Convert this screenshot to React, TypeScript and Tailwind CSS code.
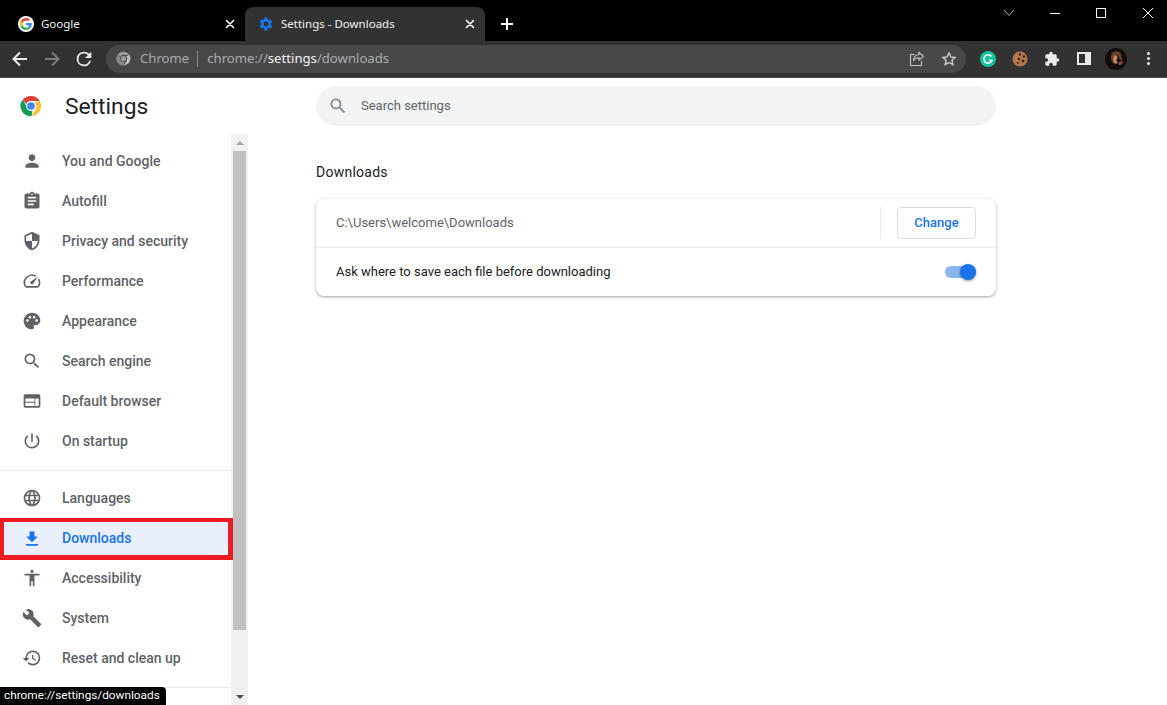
import type { ReactNode } from "react";
import {
  MdAccessibility,
  MdAssignment,
  MdBuild,
  MdFileDownload,
  MdLanguage,
  MdPalette,
  MdPerson,
  MdPowerSettingsNew,
  MdRestore,
  MdSearch,
  MdSecurity,
  MdSpeed,
  MdWeb,
} from "react-icons/md";
import type { IconType } from "react-icons";

type NavItem = { label: string; icon: IconType };

const topItems: NavItem[] = [
  { label: "You and Google", icon: MdPerson },
  { label: "Autofill", icon: MdAssignment },
  { label: "Privacy and security", icon: MdSecurity },
  { label: "Performance", icon: MdSpeed },
  { label: "Appearance", icon: MdPalette },
  { label: "Search engine", icon: MdSearch },
  { label: "Default browser", icon: MdWeb },
  { label: "On startup", icon: MdPowerSettingsNew },
];

const bottomItems: NavItem[] = [
  { label: "Accessibility", icon: MdAccessibility },
  { label: "System", icon: MdBuild },
  { label: "Reset and clean up", icon: MdRestore },
];

function ChromeLogo({ size, mono }: { size: number; mono?: boolean }) {
  const red = mono ? "#9a9a9a" : "#db4437";
  const yellow = mono ? "#bdbdbd" : "#fbc02d";
  const green = mono ? "#8a8a8a" : "#0f9d58";
  const center = mono ? "#9a9a9a" : "#4285f4";
  return (
    <svg width={size} height={size} viewBox="0 0 24 24">
      <path d="M12 1a11 11 0 0 1 9.530 5.500H12a5.500 5.500 0 0 0-5.200 3.700L3.100 5A11 11 0 0 1 12 1z" fill={red} />
      <path d="M21.530 6.500A11 11 0 0 1 12.600 23l4.200-6.900a5.500 5.500 0 0 0 .1-6.100l-.9-1.200-.2-.3z" fill={yellow} />
      <path d="M12.600 23A11 11 0 0 1 3.100 5l4.600 8.500a5.500 5.500 0 0 0 6 3.800z" fill={green} />
      <circle cx="12" cy="12" r="5.300" fill={mono ? "#484848" : "#fff"} />
      <circle cx="12" cy="12" r="4.200" fill={center} />
    </svg>
  );
}

function GoogleLogo() {
  return (
    <div className="flex h-4 w-4 items-center justify-center rounded-full bg-white">
      <svg width="12" height="12" viewBox="0 0 48 48">
        <path fill="#EA4335" d="M24 9.500c3.500 0 6.700 1.300 9.100 3.500l6.800-6.800C35.900 2.400 30.300 0 24 0 14.600 0 6.500 5.400 2.600 13.200l7.900 6.200C12.400 13.700 17.700 9.500 24 9.500z" />
        <path fill="#4285F4" d="M46.900 24.500c0-1.600-.1-3.100-.4-4.500H24v9h12.900c-.6 3-2.200 5.500-4.700 7.200l7.600 5.900c4.400-4.100 7.100-10.200 7.100-17.600z" />
        <path fill="#FBBC05" d="M10.500 28.600a14.500 14.500 0 0 1 0-9.200l-7.900-6.200a24 24 0 0 0 0 21.600z" />
        <path fill="#34A853" d="M24 48c6.500 0 11.900-2.100 15.800-5.800l-7.600-5.900c-2.100 1.400-4.900 2.300-8.200 2.300-6.300 0-11.600-4.200-13.500-9.900l-7.900 6.200C6.500 42.600 14.600 48 24 48z" />
      </svg>
    </div>
  );
}

function CloseIcon() {
  return (
    <svg width="16" height="16" viewBox="0 0 16 16" stroke="#fff" strokeWidth="1.600" strokeLinecap="round" className="translate-x-px">
      <path d="M4.500 4.500l7 7M11.500 4.500l-7 7" />
    </svg>
  );
}

function Tab({ title, icon, active }: { title: string; icon: ReactNode; active?: boolean }) {
  return (
    <div
      className={`flex h-[34px] w-[240px] items-center pl-[13px] pr-[8px] ${
        active ? "rounded-t-[8px] bg-[#323232]" : ""
      }`}
    >
      <div className="mr-[7px] shrink-0">{icon}</div>
      <span className="flex-1 text-[11.5px] text-[#f1f3f4]">{title}</span>
      <CloseIcon />
    </div>
  );
}

function WindowControls() {
  return (
    <div className="ml-auto flex h-[26px] items-center self-start text-white">
      <svg width="12" height="8" viewBox="0 0 12 8" fill="none" stroke="#bbb" strokeWidth="1" className="mr-[35px]">
        <path d="M1 1l5 5.500L11 1" />
      </svg>
      <div className="mr-[36px] h-px w-[10px] bg-white" />
      <div className="mr-[36px] h-[10px] w-[10px] border border-white" />
      <svg width="12" height="12" viewBox="0 0 12 12" stroke="#fff" strokeWidth="1" className="mr-[13px]">
        <path d="M1 1l10 10M11 1L1 11" />
      </svg>
    </div>
  );
}

function TitleBar() {
  return (
    <div className="flex h-[41px] items-end bg-black pl-[5px]">
      <Tab title="Google" icon={<GoogleLogo />} />
      <Tab
        title="Settings - Downloads"
        active
        icon={
          <svg width="16" height="16" viewBox="0 0 24 24" fill="#1a73e8">
            <path d="M19.140 12.940c.04-.3.060-.61.060-.94s-.02-.64-.07-.94l2.030-1.580a.5.5 0 0 0 .12-.61l-1.920-3.320a.5.5 0 0 0-.59-.22l-2.390.96a7 7 0 0 0-1.620-.94l-.36-2.540a.48.48 0 0 0-.48-.41h-3.840a.47.47 0 0 0-.47.41l-.36 2.540c-.59.24-1.130.57-1.620.94l-2.390-.96a.48.48 0 0 0-.59.22L2.740 8.870a.47.47 0 0 0 .12.61l2.030 1.580c-.05.3-.09.63-.09.94s.02.64.07.94l-2.030 1.580a.5.5 0 0 0-.12.61l1.920 3.320c.12.22.37.29.59.22l2.390-.96c.5.38 1.030.7 1.620.94l.36 2.540c.05.24.24.41.48.41h3.840c.24 0 .44-.17.47-.41l.36-2.540c.59-.24 1.130-.56 1.620-.94l2.390.96c.22.08.47 0 .59-.22l1.920-3.320a.47.47 0 0 0-.12-.61zM12 15.600a3.600 3.600 0 1 1 0-7.200 3.600 3.600 0 0 1 0 7.200z" />
          </svg>
        }
      />
      <div className="flex h-[34px] w-[44px] items-center justify-center">
        <svg width="14" height="14" viewBox="0 0 14 14" stroke="#fff" strokeWidth="2">
          <path d="M7 1v12M1 7h12" />
        </svg>
      </div>
      <WindowControls />
    </div>
  );
}

function Omnibox() {
  return (
    <div className="flex h-[28px] w-[860px] items-center rounded-full bg-[#484848] pl-[10px] pr-[9px] text-[13.15px]">
      <ChromeLogo size={15} mono />
      <span className="ml-[9px] pt-px text-[#a9adb1]">Chrome</span>
      <div className="ml-[8px] mr-[9px] h-[16px] w-px bg-[#8a8a8a]" />
      <span className="pt-px text-[#a9adb1]">
        chrome://<span className="text-[#f1f3f4]">settings</span>/downloads
      </span>
      <div className="ml-auto flex items-center gap-[16px]">
        <svg width="16" height="16" viewBox="0 0 16 16" fill="none" stroke="#c4c7c5" strokeWidth="1.100">
          <path d="M10 1.500l4.500 3.800L10 9V6.800C7.500 6.800 5.500 7.800 4.500 10c0-3.800 2-6.100 5.500-6.500z" />
          <path d="M5.500 3.500H1.500v11h11V10" />
        </svg>
        <svg width="16" height="16" viewBox="0 0 24 24" fill="none" stroke="#d0d3d4" strokeWidth="2">
          <path d="M12 3l2.800 6 6.400.7-4.800 4.300 1.400 6.400L12 17.200 6.200 20.400l1.400-6.400-4.800-4.300 6.400-.7z" />
        </svg>
      </div>
    </div>
  );
}

function Toolbar() {
  return (
    <div className="flex h-[37px] items-center border-b border-[#4b4b4b] bg-[#323232] pb-px">
      <div className="flex w-[106px] items-center pl-[11px]">
        <svg width="18" height="18" viewBox="0 0 18 18" fill="none" stroke="#e8eaed" strokeWidth="2">
          <path d="M16 9H3M9 2.500L2.500 9 9 15.500" />
        </svg>
        <svg width="18" height="18" viewBox="0 0 18 18" fill="none" stroke="#7b7d7f" strokeWidth="2" className="ml-[14px]">
          <path d="M2 9h13M9 2.500L15.500 9 9 15.500" />
        </svg>
        <svg width="22" height="22" viewBox="0 0 24 24" fill="#e8eaed" className="ml-[12px]">
          <path d="M17.650 6.350A8 8 0 0 0 12 4a8 8 0 1 0 7.740 10h-2.080A6 6 0 1 1 12 6c1.660 0 3.140.69 4.220 1.780L13 11h7V4z" />
        </svg>
      </div>
      <Omnibox />
      <Extensions />
    </div>
  );
}

function Extensions() {
  return (
    <div className="ml-[14px] flex items-center">
      <div className="flex h-[16px] w-[16px] items-center justify-center rounded-full bg-[#15c39a]">
        <svg width="12" height="12" viewBox="0 0 12 12" fill="none" stroke="#fff" strokeWidth="1.500">
          <path d="M9.500 3.500A4.200 4.200 0 1 0 10 7.500H7" />
        </svg>
      </div>
      <svg width="16" height="16" viewBox="0 0 16 16" className="ml-[16px]">
        <circle cx="8" cy="8" r="7.500" fill="#b5784e" />
        <circle cx="8" cy="3.500" r="1.200" fill="#3b2314" />
        <circle cx="12" cy="5.500" r="1.300" fill="#3b2314" />
        <circle cx="7" cy="8" r="1.300" fill="#3b2314" />
        <circle cx="11" cy="10" r="1.500" fill="#3b2314" />
        <circle cx="6" cy="12" r="1" fill="#3b2314" />
      </svg>
      <svg width="16" height="16" viewBox="0 0 24 24" fill="#e8eaed" className="ml-[16px]">
        <path d="M20.500 11H19V7a2 2 0 0 0-2-2h-4V3.500a2.500 2.500 0 0 0-5 0V5H4a2 2 0 0 0-2 2v3.800h1.500a2.700 2.700 0 0 1 0 5.400H2V20a2 2 0 0 0 2 2h3.800v-1.500a2.700 2.700 0 0 1 5.400 0V22H17a2 2 0 0 0 2-2v-4h1.500a2.500 2.500 0 0 0 0-5z" />
      </svg>
      <div className="ml-[17px] h-[13px] w-[14px] border-[2px] border-r-[6px] border-[#e8eaed]" />
      <svg width="22" height="22" viewBox="0 0 22 22" className="ml-[14px]">
        <circle cx="11" cy="11" r="11" fill="#120c0a" />
        <path d="M7 5c3-3 8-2 9 1 1 2 0 4 2 7l-3-1c-1-2-1-4-3-5-2 1-2 3-3 5-1 1-1 2 0 4-3-2-4-7-2-11z" fill="#6b4029" />
        <path d="M9 8c1-1 2-1 3 0 1 2 0 4-1 5l2 1c-1 2-3 2-4 1-1-2-1-5 0-7z" fill="#c98a63" />
        <path d="M14 14c2-1 3-1 4 0 0 2-2 3-4 3-1-1-1-2 0-3z" fill="#8a4a3a" />
      </svg>
      <div className="ml-[20px] flex flex-col gap-[2px]">
        <div className="h-[3px] w-[3px] rounded-full bg-[#e8eaed]" />
        <div className="h-[3px] w-[3px] rounded-full bg-[#e8eaed]" />
        <div className="h-[3px] w-[3px] rounded-full bg-[#e8eaed]" />
      </div>
    </div>
  );
}

function NavRow({ item }: { item: NavItem }) {
  const Icon = item.icon;
  return (
    <div className="flex h-[40px] items-center pl-[22px] text-[14px] font-medium text-[#5f6368]">
      <Icon size={20} className="mr-[20px] shrink-0" color="#5f6368" />
      {item.label}
    </div>
  );
}

function Scrollbar() {
  return (
    <div className="flex h-full w-[17px] shrink-0 flex-col items-center bg-[#f1f1f1]">
      <div className="flex h-[17px] items-center justify-center">
        <div className="h-0 w-0 border-x-[4px] border-b-[4px] border-x-transparent border-b-[#a3a3a3]" />
      </div>
      <div className="h-[479px] w-[13px] bg-[#c1c1c1]" />
      <div className="mt-auto flex h-[17px] items-center justify-center">
        <div className="h-0 w-0 border-x-[4px] border-t-[4px] border-x-transparent border-t-[#505050]" />
      </div>
    </div>
  );
}

function Sidebar() {
  return (
    <div className="flex w-[248px] shrink-0 flex-col">
      <div className="flex h-[56px] shrink-0 items-center pl-[20px]">
        <ChromeLogo size={22} />
        <span className="ml-[23px] pt-[2px] text-[22.8px] font-normal text-[#202124]">Settings</span>
      </div>
      <div className="flex min-h-0 flex-1">
        <div className="w-[231px] shrink-0 pt-[7px]">
          {topItems.map((item) => (
            <NavRow key={item.label} item={item} />
          ))}
          <div className="mt-[9px] mb-[7px] h-px bg-[#e8eaed]" />
          <NavRow item={{ label: "Languages", icon: MdLanguage }} />
          <div className="relative h-[42px] w-[233px] border-[4px] border-r-[5px] border-b-[5px] border-[#ed1c24] bg-white">
            <div className="flex h-full items-center rounded-r-[8px] bg-[#e8f0fe] pl-[18px] text-[14px] font-medium text-[#1a73e8]">
              <MdFileDownload size={20} className="mr-[20px] shrink-0" color="#1a73e8" />
              Downloads
            </div>
          </div>
          <div className="-mt-[2px]">
            {bottomItems.map((item) => (
              <NavRow key={item.label} item={item} />
            ))}
          </div>
          <div className="mt-[9px] h-px bg-[#e8eaed]" />
        </div>
        <Scrollbar />
      </div>
    </div>
  );
}

function DownloadsCard() {
  return (
    <div className="mt-[18px] rounded-[8px] bg-white shadow-[0_1px_2px_rgba(60,64,67,0.3),0_1px_3px_1px_rgba(60,64,67,0.15)]">
      <div className="flex h-[49px] items-center border-b border-[#e8eaed] pl-[20px] pr-[20px] text-[13px] text-[#5f6368]">
        C:\Users\welcome\Downloads
        <div className="ml-auto h-[32px] w-px bg-[#e8eaed]" />
        <div className="ml-[16px] flex h-[32px] w-[79px] items-center justify-center rounded-[4px] border border-[#dadce0] font-medium text-[#1a73e8]">
          Change
        </div>
      </div>
      <div className="flex h-[48px] items-center pl-[20px] pr-[20px] text-[13px] text-[#202124]">
        Ask where to save each file before downloading
        <div className="relative ml-auto h-[12px] w-[31px] rounded-full bg-[#8ab4f0]">
          <div className="absolute -top-[2px] right-0 h-[16px] w-[16px] rounded-full bg-[#1a73e8] shadow-[0_1px_3px_rgba(0,0,0,0.4)]" />
        </div>
      </div>
    </div>
  );
}

function Content() {
  return (
    <div className="flex-1 pl-[68px] pt-[8px]">
      <div className="w-[680px]">
        <div className="flex h-[40px] items-center rounded-full bg-[#f1f3f4] pl-[12px] text-[13px] text-[#5f6368]">
          <MdSearch size={20} color="#80868b" className="mr-[13px]" />
          Search settings
        </div>
        <h2 className="mt-[37px] text-[14px] font-normal leading-[18px] tracking-[0.25px] text-[#202124]">Downloads</h2>
        <DownloadsCard />
      </div>
    </div>
  );
}

export default function App() {
  return (
    <div className="relative flex h-[705px] w-[1167px] flex-col overflow-hidden bg-white font-['Roboto',sans-serif]">
      <div className="font-['Noto_Sans',sans-serif]">
        <TitleBar />
        <Toolbar />
      </div>
      <div className="flex min-h-0 flex-1">
        <Sidebar />
        <Content />
      </div>
      <div className="absolute bottom-0 left-0 flex h-[18px] items-center rounded-tr-[4px] bg-black pl-[4px] pr-[6px] text-[11.8px] text-white">
        chrome://settings/downloads
      </div>
    </div>
  );
}
